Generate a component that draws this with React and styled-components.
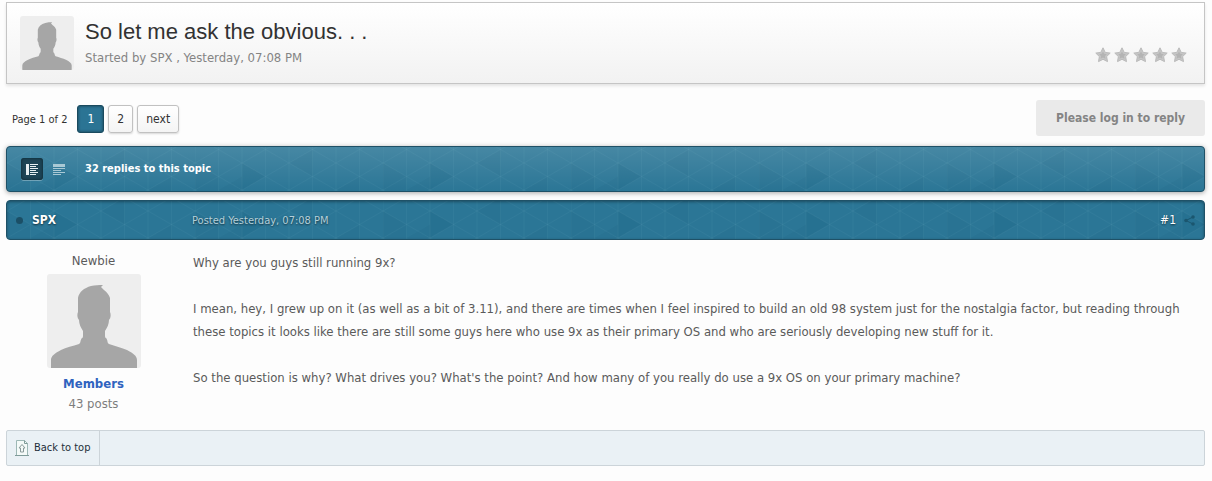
import React from "react";
import styled, { createGlobalStyle, css } from "styled-components";

const GlobalStyle = createGlobalStyle`
  * {
    box-sizing: border-box;
  }
  body {
    margin: 0;
    background: #fdfdfd;
    color: #5a5a5a;
    font: 12px "DejaVu Sans Condensed", "DejaVu Sans", sans-serif;
  }
  a {
    color: inherit;
    text-decoration: none;
  }
`;

// one tile is eight columns of the triangle grid
const tile = encodeURIComponent(`<svg xmlns="http://www.w3.org/2000/svg" width="188" height="81" viewBox="0 0 188 81">
<g fill="#0f5a7c" fill-opacity=".18">
<path d="M47 16l23.5 13.5L47 43z"/>
</g>
<g fill="#0f5a7c" fill-opacity=".1">
<path d="M117.500 2.500v27L94 16zM47 29.500v27L23.500 43zM23.500 29.500v27L0 43zM164.500 29.500v27L141 43zM0 16l23.500 13.500L0 43z"/>
</g>
<g stroke="#5fa0b4" stroke-opacity=".12" fill="none">
<path d="M0 0v81M23.500 0v81M47 0v81M70.500 0v81M94 0v81M117.500 0v81M141 0v81M164.500 0v81"/>
<path d="M0-11l188 108M0 16l188 108M0 43l188 108M0 70l188 108M0-38L188 70M0-65L188 43M0-92L188 16"/>
<path d="M0 16L188-92M0 43L188-65M0 70L188-38M0 97L188-11M0 124L188 16M0 151L188 43M0 178L188 70"/>
</g></svg>`);

const Page = styled.main`
  padding: 2px 7px 16px 6px;
`;

const TopicHeader = styled.header`
  display: flex;
  align-items: center;
  gap: 11px;
  padding: 13px 17px 13px 13px;
  border: 1px solid #c5c5c5;
  background: linear-gradient(#fff, #f2f2f2);
  box-shadow: 0 2px 3px rgba(0, 0, 0, 0.1);
`;

const Avatar = styled.svg`
  display: block;
  flex: none;
  width: ${(props) => props.$size}px;
  height: ${(props) => props.$size}px;
  border-radius: 3px;
`;

const TopicInfo = styled.div`
  flex: 1;
  padding-top: 2px;
`;

const Title = styled.h1`
  margin: 0;
  color: #323232;
  font: 22px/28px "Liberation Sans", Arial, sans-serif;
`;

const Started = styled.div`
  color: #848484;
  font-size: 13px;
  line-height: 24px;
`;

const Rating = styled.div`
  display: flex;
  gap: 3px;
  align-self: flex-end;
  padding-bottom: 7px;
`;

const Controls = styled.div`
  display: flex;
  align-items: center;
  justify-content: space-between;
  margin: 16px 0 10px;
`;

const Pagination = styled.nav`
  display: flex;
  align-items: center;
  gap: 4px;
  padding: 2px 0 0 6px;
  color: #323232;
  font-size: 11px;
`;

const PageCount = styled.span`
  margin-right: 6px;
`;

const PageLink = styled.a`
  padding: 0 8px;
  border: 1px solid #c1c1c1;
  border-radius: 3px;
  background: linear-gradient(#fff, #f4f4f4);
  box-shadow: 0 1px 2px rgba(0, 0, 0, 0.15);
  font-size: 12px;
  line-height: 26px;
  ${(props) =>
    props.$active &&
    css`
      border-color: #1a4a5e;
      background: #2b7494;
      box-shadow: inset 0 0 3px rgba(0, 0, 0, 0.5);
      color: #fff;
      padding: 0 9px;
    `}
`;

const ReplyButton = styled.button`
  padding: 0 20px;
  border: 0;
  border-radius: 3px;
  background: #eaeaea;
  color: #848484;
  font: bold 12px/36px "DejaVu Sans Condensed", "DejaVu Sans", sans-serif;
`;

const Bar = styled.div`
  display: flex;
  align-items: center;
  border: 1px solid #1f5167;
  border-radius: 4px;
  background: url("data:image/svg+xml,${tile}"), #2b7696;
  color: #fff;
`;

const RepliesBar = styled(Bar)`
  height: 46px;
  padding: 0 14px;
  background:
    linear-gradient(rgba(255, 255, 255, 0.13), rgba(255, 255, 255, 0)),
    url("data:image/svg+xml,${tile}"),
    #2b7696;
  box-shadow: 0 1px 5px rgba(0, 0, 0, 0.35);
`;

const ViewButton = styled.button`
  display: flex;
  align-items: center;
  justify-content: center;
  width: 22px;
  height: 22px;
  margin-right: 5px;
  padding: 0;
  border: 0;
  border-radius: 3px;
  background: none;
  color: #a9c9d5;
  ${(props) =>
    props.$active &&
    css`
      background: #1d4455;
      box-shadow: inset 0 0 3px #0b222c, 0 1px 0 rgba(255, 255, 255, 0.3);
      color: #e6eef1;
    `}
`;

const RepliesTitle = styled.h2`
  margin: 0 0 0 10px;
  font-size: 11px;
  line-height: 16px;
`;

const PostBar = styled(Bar)`
  height: 40px;
  margin-top: 8px;
  padding: 0 9px;
  background-position: 0 -6px;
  box-shadow: inset 0 1px 3px rgba(0, 0, 0, 0.35);
  text-shadow: 0 1px 2px rgba(0, 0, 0, 0.6);
`;

const StatusDot = styled.span`
  width: 7px;
  height: 7px;
  margin-right: 9px;
  border-radius: 50%;
  background: #1b4f66;
`;

const Author = styled.a`
  width: 160px;
  font-size: 12px;
  font-weight: bold;
`;

const PostDate = styled.span`
  flex: 1;
  color: #b4d0db;
  font-size: 11px;
`;

const PostNumber = styled.a`
  margin-right: 8px;
`;

const Post = styled.article`
  display: flex;
  padding: 11px 12px 16px 0;
  font-size: 13px;
  line-height: 20px;
`;

const AuthorInfo = styled.aside`
  display: flex;
  flex: none;
  flex-direction: column;
  align-items: center;
  width: 175px;
  margin-right: 12px;
`;

const Rank = styled.span`
  margin-bottom: 3px;
`;

const Group = styled.a`
  margin-top: 6px;
  color: #2f63bf;
  font-weight: bold;
`;

const PostCount = styled.span`
  color: #7d7d7d;
`;

const PostBody = styled.div`
  flex: 1;
  line-height: 23px;
  p {
    margin: 0 0 23px;
  }
`;

const PostFooter = styled.footer`
  display: flex;
  border: 1px solid #ccd4d9;
  border-radius: 2px;
  background: #eaf1f5;
`;

const BackToTop = styled.a`
  display: flex;
  align-items: center;
  gap: 5px;
  padding: 0 9px 0 8px;
  border-right: 1px solid #ccd4d9;
  color: #1e2f3b;
  font-size: 11px;
  line-height: 34px;
`;

const UserPhoto = ({ size }) => (
  <Avatar $size={size} viewBox="0 0 94 94" role="img" aria-label="SPX's photo">
    <path d="M0 0h94v94H0z" fill="#eee" />
    <path
      d="M4 94v-8c0-4 4-7 10-10 5-2.500 12-4 18-6 2-1 1-4 3-6 1 0 1-2 1-3v-4c-2-3-4-7-4-11-2-2-2-6-1-8V24c1-6 6-10 13-12 4-1 8-1 12-1l-2 2 3 3c3 2 5 5 6 8v14c1 2 1 6-1 8 0 4-2 8-4 11v4c0 1 0 3 1 3 2 2 1 5 3 6 6 2 13 4 18 6 6 3 10 6 10 10v8z"
      fill="#a6a6a6"
    />
  </Avatar>
);

const Star = () => (
  <svg width="16" height="16" viewBox="0 0 16 16">
    <path
      d="M8 .8l2.200 4.600 5 .7-3.600 3.500.9 5L8 12.300l-4.500 2.300.9-5L.8 6.100l5-.7z"
      fill="#c6c6c6"
      stroke="#bababa"
      strokeLinejoin="round"
    />
    <path d="M8 4.500l1.300 2.300 2.500.5-1.800 1.800.4 2.600L8 10.600l-2.400 1.100.4-2.600-1.800-1.800 2.500-.5z" fill="#b4b4b4" />
  </svg>
);

const App = () => {
  return (
    <Page id="top">
      <GlobalStyle />
      <TopicHeader>
        <UserPhoto size={54} />
        <TopicInfo>
          <Title>So let me ask the obvious. . .</Title>
          <Started>
            Started by <a href="#spx">SPX</a> , Yesterday, 07:08 PM
          </Started>
        </TopicInfo>
        <Rating role="img" aria-label="Not rated">
          {[1, 2, 3, 4, 5].map((value) => (
            <Star key={value} />
          ))}
        </Rating>
      </TopicHeader>
      <Controls>
        <Pagination>
          <PageCount>Page 1 of 2</PageCount>
          <PageLink href="#page1" $active>
            1
          </PageLink>
          <PageLink href="#page2">2</PageLink>
          <PageLink href="#page2">next</PageLink>
        </Pagination>
        <ReplyButton>Please log in to reply</ReplyButton>
      </Controls>
      <RepliesBar>
        <ViewButton $active aria-label="Standard view">
          <svg width="12" height="11" fill="currentColor">
            <path d="M0 0h3v11H0zM4 0h8v1H4zM4 2h6v1H4zM4 4h8v1H4zM4 6h6v1H4zM4 8h8v1H4zM4 10h6v1H4z" />
          </svg>
        </ViewButton>
        <ViewButton aria-label="Linear view">
          <svg width="12" height="11" fill="currentColor">
            <path d="M0 0h12v3H0zM0 4h12v1H0zM0 6h8v1H0zM0 8h12v1H0zM0 10h8v1H0z" />
          </svg>
        </ViewButton>
        <RepliesTitle>32 replies to this topic</RepliesTitle>
      </RepliesBar>
      <PostBar>
        <StatusDot />
        <Author href="#spx">SPX</Author>
        <PostDate>Posted Yesterday, 07:08 PM</PostDate>
        <PostNumber href="#post1">#1</PostNumber>
        <svg width="11" height="11" viewBox="0 0 11 11" fill="#1b566f">
          <path d="M9 2L2 5.500 9 9" fill="none" stroke="#1b566f" />
          <circle cx="9" cy="2" r="1.800" />
          <circle cx="2" cy="5.500" r="1.800" />
          <circle cx="9" cy="9" r="1.800" />
        </svg>
      </PostBar>
      <Post>
        <AuthorInfo>
          <Rank>Newbie</Rank>
          <UserPhoto size={94} />
          <Group href="#members">Members</Group>
          <PostCount>43 posts</PostCount>
        </AuthorInfo>
        <PostBody>
          <p>Why are you guys still running 9x?</p>
          <p>
            I mean, hey, I grew up on it (as well as a bit of 3.11), and there
            are times when I feel inspired to build an old 98 system just for
            the nostalgia factor, but reading through these topics it looks like
            there are still some guys here who use 9x as their primary OS and
            who are seriously developing new stuff for it.
          </p>
          <p>
            So the question is why? What drives you? What's the point? And how
            many of you really do use a 9x OS on your primary machine?
          </p>
        </PostBody>
      </Post>
      <PostFooter>
        <BackToTop href="#top">
          <svg width="14" height="16" viewBox="0 0 14 16" fill="none">
            <path d="M1.500.5h8l3 3v12h-11z" fill="#f4faf8" stroke="#9db8b5" />
            <path d="M9.500.5v3h3M0 15.500h14" stroke="#7f9b99" />
            <path d="M7 4.500l3 3.500H8.500v4h-3V8H4z" stroke="#8a9a9a" />
          </svg>
          Back to top
        </BackToTop>
      </PostFooter>
    </Page>
  );
};

export default App;
